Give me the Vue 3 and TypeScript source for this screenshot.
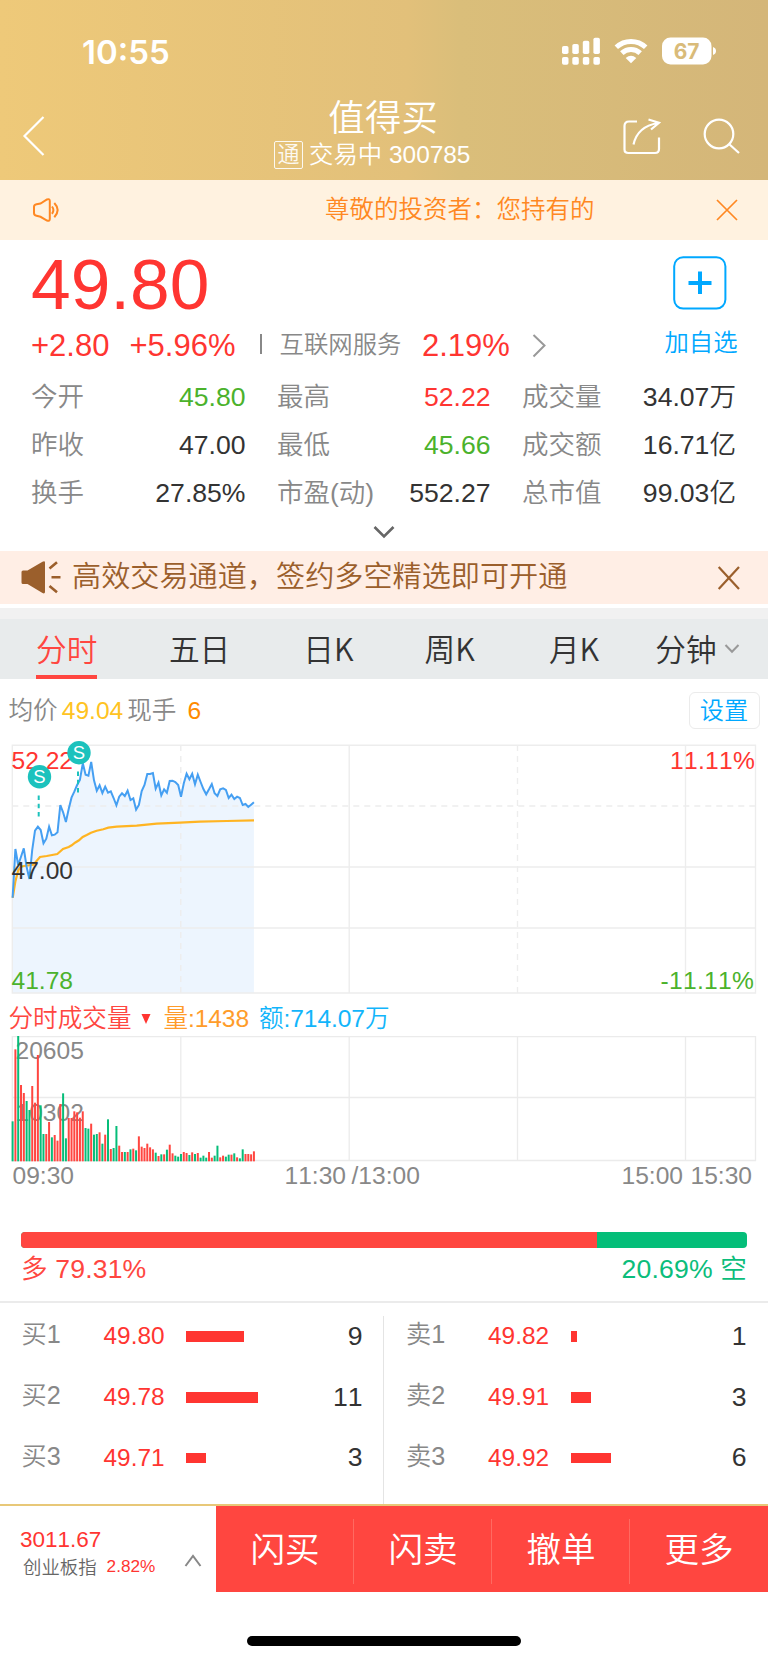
<script setup lang="ts">
interface Stat {
  label: string
  value: string
  tone?: 'up' | 'down'
}

interface Order {
  label: string
  price: string
  bar: number
  qty: number
}

const stats: Stat[] = [
  { label: '今开', value: '45.80', tone: 'down' },
  { label: '最高', value: '52.22', tone: 'up' },
  { label: '成交量', value: '34.07万' },
  { label: '昨收', value: '47.00' },
  { label: '最低', value: '45.66', tone: 'down' },
  { label: '成交额', value: '16.71亿' },
  { label: '换手', value: '27.85%' },
  { label: '市盈(动)', value: '552.27' },
  { label: '总市值', value: '99.03亿' },
]

const tabs: string[] = ['分时', '五日', '日K', '周K', '月K', '分钟']

const buys: Order[] = [
  { label: '买1', price: '49.80', bar: 58, qty: 9 },
  { label: '买2', price: '49.78', bar: 72, qty: 11 },
  { label: '买3', price: '49.71', bar: 20, qty: 3 },
]
const sells: Order[] = [
  { label: '卖1', price: '49.82', bar: 6.5, qty: 1 },
  { label: '卖2', price: '49.91', bar: 20, qty: 3 },
  { label: '卖3', price: '49.92', bar: 40, qty: 6 },
]
const books: Order[][] = [buys, sells]
const actions: string[] = ['闪买', '闪卖', '撤单', '更多']

// One sample per minute from 09:30; values are thirds of a pixel below the chart's top edge.
const startX = 12.6
const stepX = 2.806
const price: number[] = [
  503, 357, 405, 380, 355, 410, 447, 360, 302, 290, 300, 340, 326, 290, 316, 314, 307, 225, 247, 276,
  237, 203, 185, 165, 150, 100, 134, 137, 96, 151, 182, 166, 189, 170, 188, 184, 204, 226, 200, 190,
  198, 182, 210, 205, 239, 225, 183, 165, 132, 132, 129, 176, 158, 196, 178, 188, 153, 152, 156, 165,
  200, 160, 131, 148, 131, 163, 134, 156, 177, 193, 178, 162, 190, 198, 178, 175, 180, 204, 194, 207,
  200, 204, 225, 222, 231, 224, 217,
]
const average: [number, number][] = [
  [38, 503], [46, 455], [55, 420], [63, 410], [72, 408], [100, 404], [120, 381], [140, 378], [172, 372],
  [189, 357], [206, 351], [215, 346], [225, 338], [237, 331], [248, 321], [260, 315], [273, 308],
  [290, 302], [310, 298], [325, 293], [350, 290], [410, 287], [470, 281], [540, 278], [600, 275],
  [680, 273], [762, 271],
]
const pricePoints: string = price.map((y, i) => `${(startX + i * stepX).toFixed(1)},${(y / 3).toFixed(1)}`).join(' ')
const areaPoints: string = `${startX},263 ${pricePoints} ${(startX + 86 * stepX).toFixed(1)},263`
const averagePoints: string = average.map(([x, y]) => `${(x / 3).toFixed(1)},${(y / 3).toFixed(1)}`).join(' ')

const volumeTop: number[] = [
  394, 178, 137, 285, 309, 333, 360, 288, 338, 195, 346, 432, 432, 396, 442, 435, 452, 342, 310, 445,
  384, 384, 364, 367, 383, 364, 414, 416, 401, 434, 432, 427, 461, 434, 388, 477, 474, 408, 467, 486,
  486, 486, 478, 476, 481, 439, 470, 474, 461, 472, 478, 488, 498, 493, 493, 479, 464, 490, 497, 500,
  492, 486, 489, 495, 487, 492, 489, 503, 497, 503, 486, 503, 497, 467, 502, 497, 500, 494, 494, 490,
  502, 505, 478, 492, 492, 493, 484,
]
const volumeSide: string =
  'grgrrggrrrggrrgrrrggrrrrrrggrggrgrgrggrrgrgrgrrrrrrgrgrgrrgggrrgrgrgggrrggrrggrgrggrrrr'
const bars = volumeTop.map((top, i) => ({
  x: startX + i * stepX - 1,
  y: top / 3 - 46,
  h: (514 - top) / 3,
  fill: volumeSide[i] === 'g' ? '#06bd79' : '#ff4640',
}))
</script>

<template>
  <div class="phone">
    <header class="top">
      <div class="status">
        <span class="clock">10:55</span>
        <svg class="status-icons" width="160" height="32" viewBox="0 0 160 32" fill="#fff">
          <rect x="6" y="11" width="6.5" height="8" rx="1.8" />
          <rect x="16.3" y="9" width="6.5" height="10" rx="1.8" />
          <rect x="26.8" y="5.8" width="6.5" height="13.2" rx="1.8" />
          <rect x="37.4" y="2.7" width="6.5" height="16.3" rx="1.8" />
          <rect v-for="x in [6, 16.3, 26.8, 37.4]" :key="x" :x="x" y="22" width="6.5" height="7.7" rx="1.8" />
          <g fill="none" stroke="#fff" stroke-width="5">
            <path d="M60.3 12.2A21.5 21.5 0 0 1 89.7 12.2" />
            <path d="M65.8 18.2A13.5 13.5 0 0 1 84.2 18.2" />
          </g>
          <path d="M75 28.2L69.7 22.9Q75 18.6 80.3 22.9Z" />
          <rect x="106" y="2.5" width="49.5" height="27" rx="8.5" />
          <path d="M157 12Q160 13.2 160 16T157 20Z" />
          <text x="130.6" y="23.7" text-anchor="middle" class="battery">67</text>
        </svg>
      </div>
      <div class="nav">
        <svg class="back" width="24" height="42" viewBox="0 0 24 42"><path d="M21.5 2L2.5 21L21.5 40" /></svg>
        <div class="title">
          <div class="name">值得买</div>
          <div class="sub"><span class="tag">通</span><span>交易中 300785</span></div>
        </div>
        <div class="nav-icons">
          <svg width="40" height="40" viewBox="0 0 40 40">
            <path d="M16 5.5H8Q3.5 5.5 3.5 10V33.5Q3.5 37 7.5 37H34Q38 37 38 33V21.5" />
            <path d="M12.5 28.5C15 17 22 9.5 37 7M27.5 3.5L38 6.8L30 13.5" />
          </svg>
          <svg width="40" height="40" viewBox="0 0 40 40">
            <circle cx="18" cy="18" r="14.3" />
            <path d="M28.3 28.3L38 37" />
          </svg>
        </div>
      </div>
    </header>

    <section class="notice">
      <svg width="28" height="26" viewBox="0 0 28 26">
        <path d="M4.5 7.2L8.5 6.5L15 2.5Q17.8 1.3 17.8 4V22Q17.8 24.6 15 23.5L8.5 19.8L4.5 18.8Q2 18.3 2 16V9.8Q2 7.6 4.5 7.2Z" />
        <path d="M20 9.5Q22.8 13 20 16.8M22.3 6Q29 13 22.3 20.3" />
      </svg>
      <p>尊敬的投资者：您持有的</p>
      <svg class="thin" width="24" height="24" viewBox="0 0 24 24"><path d="M2 2L22 22M22 2L2 22" /></svg>
    </section>

    <section class="quote">
      <div class="last up">49.80</div>
      <div class="change">
        <span class="up">+2.80</span>
        <span class="up">+5.96%</span>
        <i class="rule"></i>
        <span class="sector">互联网服务</span>
        <span class="up">2.19%</span>
        <svg width="16" height="26" viewBox="0 0 16 26"><path d="M1.5 2L12.5 12.5L1.5 23.5" /></svg>
      </div>
      <div class="watch">
        <svg width="54" height="54" viewBox="0 0 54 54">
          <rect x="1.2" y="1.2" width="51.2" height="51.4" rx="9" />
          <path d="M15.5 27H38.5M27 15.5V38" />
        </svg>
        <span>加自选</span>
      </div>
      <dl class="stats">
        <div v-for="s in stats" :key="s.label">
          <dt>{{ s.label }}</dt>
          <dd :class="s.tone">{{ s.value }}</dd>
        </div>
      </dl>
      <svg class="expand" width="24" height="14" viewBox="0 0 24 14"><path d="M2.5 2L12 11.5L21.5 2" /></svg>
    </section>

    <section class="promo">
      <svg width="42" height="38" viewBox="0 0 42 38">
        <path d="M2 11.5Q.5 11.5 .5 13V23.5Q.5 25 2 25H6.5L21.5 34.1Q24 35 24 33V3.5Q24 1.5 21.5 2.7L6.5 11.5Z" />
        <path class="rays" d="M28.5 9.5L36 3.2M30.5 18.2H39.5M28.5 27L36 33.3" />
      </svg>
      <p>高效交易通道，签约多空精选即可开通</p>
      <svg class="close" width="24" height="26" viewBox="0 0 24 26"><path d="M1.7 2L22 24M22 2L1.7 24" /></svg>
    </section>

    <nav class="tabs">
      <span v-for="(t, i) in tabs" :key="t" :class="{ active: i === 0 }">{{ t }}</span>
      <svg width="16" height="12" viewBox="0 0 16 12"><path d="M1.5 2L8 8.8L14.5 2" /></svg>
    </nav>

    <section class="avg">
      <span>均价</span><span class="yellow">49.04</span><span>现手</span><span class="orange">6</span>
      <button type="button">设置</button>
    </section>

    <svg class="chart" width="768" height="264" viewBox="0 0 768 264">
      <polygon :points="areaPoints" fill="#edf5fe" />
      <g fill="none" stroke="#ededed" stroke-width="1.4">
        <path d="M12.3 15.3H755.5V263H12.3ZM12.3 137H755.5M12.3 198H755.5M349.2 15V263M685.5 15V263" />
        <path d="M12.3 76H755.5M180.8 15V263M517.5 15V263" stroke-dasharray="6 5" />
      </g>
      <text x="11.5" y="39" fill="#ff3531">52.22</text>
      <text x="670" y="39" class="pct" fill="#ff3531">11.11%</text>
      <text x="11.5" y="258.5" fill="#4bb22c">41.78</text>
      <text x="660.5" y="258.5" class="pct" fill="#4bb22c">-11.11%</text>
      <polyline :points="averagePoints" fill="none" stroke="#ffb422" stroke-width="2.2" />
      <polyline :points="pricePoints" fill="none" stroke="#459ff2" stroke-width="2" />
      <text x="11.5" y="148.5" fill="#333">47.00</text>
      <path d="M38.7 65.5V87M78 41.5V63" stroke="#1cc2bd" stroke-width="2" stroke-dasharray="4.6 3.6" />
      <g fill="#1cc2bd">
        <circle cx="39.5" cy="46.8" r="11.7" />
        <circle cx="79" cy="22.8" r="11.7" />
      </g>
      <g class="mark">
        <text x="39.5" y="53.3">S</text>
        <text x="79" y="29.3">S</text>
      </g>
    </svg>

    <div class="legend">
      <span class="vol-name">分时成交量</span>
      <svg width="10" height="10" viewBox="0 0 10 10"><path d="M.5 0H9.5L5 10Z" fill="#ff3531" /></svg>
      <span class="vol-qty">量:1438</span>
      <span class="vol-amt">额:714.07万</span>
    </div>

    <svg class="chart" width="768" height="161" viewBox="0 0 768 161">
      <path
        d="M12.3 .6H755.5V124.5H12.3ZM12.3 61.5H755.5M180.8 1V125M349.2 1V125M517.5 1V125M685.5 1V125"
        fill="none"
        stroke="#ebebeb"
        stroke-width="1.3"
      />
      <g fill="#888">
        <text x="15.5" y="23">20605</text>
        <text x="15.5" y="84.5">10302</text>
        <text x="12.5" y="148">09:30</text>
        <text x="284.5" y="148">11:30</text>
        <text x="351.5" y="148">/13:00</text>
        <text x="621.5" y="148">15:00</text>
        <text x="690.5" y="148">15:30</text>
      </g>
      <rect v-for="(b, i) in bars" :key="i" :x="b.x" :y="b.y" width="2" :height="b.h" :fill="b.fill" />
    </svg>

    <section class="ratio">
      <div class="ratio-bar"><i></i></div>
      <div class="ratio-text"><span>多 79.31%</span><span class="short">20.69% 空</span></div>
    </section>

    <section class="book">
      <div v-for="(side, n) in books" :key="n" class="side">
        <div v-for="o in side" :key="o.label" class="order">
          <span class="lvl">{{ o.label }}</span>
          <span class="px">{{ o.price }}</span>
          <i class="depth" :style="{ width: o.bar + 'px' }"></i>
          <span class="qty">{{ o.qty }}</span>
        </div>
      </div>
    </section>

    <footer class="bottom">
      <div class="index">
        <div>
          <div class="index-val">3011.67</div>
          <div class="index-name"><span>创业板指</span><em>2.82%</em></div>
        </div>
        <svg width="18" height="14" viewBox="0 0 18 14"><path d="M1.5 12L9 2L16.5 12" /></svg>
      </div>
      <div class="actions">
        <span v-for="a in actions" :key="a">{{ a }}</span>
      </div>
    </footer>
    <div class="home"></div>
  </div>
</template>

<style>
body {
  margin: 0;
  background: #fff;
}
</style>

<style scoped>
.phone {
  width: 768px;
  height: 1663px;
  overflow: hidden;
  background: #fff;
  color: #333;
  font-family: 'Liberation Sans', 'Noto Sans CJK SC', sans-serif;
  font-size: 24.6px;
  font-weight: 350;
  font-kerning: none;
  white-space: nowrap;
}
svg {
  display: block;
  flex: none;
}
p,
dl,
dd {
  margin: 0;
}
.up {
  color: #ff3531;
}
.down {
  color: #4bb22c;
}

.top {
  height: 180px;
  background: linear-gradient(90deg, #eec979, #e2c07a 53%, #dabe7a 60%, #d4b679);
  color: #fff;
}
.status {
  display: flex;
  justify-content: space-between;
  height: 101px;
  box-sizing: border-box;
  padding: 35px 52px 0 82px;
}
.clock {
  font: 600 33px/34px Inter, sans-serif;
}
.battery {
  font: 700 21px Inter, sans-serif;
  fill: #d9bb79;
}
.nav {
  display: flex;
  height: 79px;
}
.nav svg {
  fill: none;
  stroke: #fff;
  stroke-width: 2.2;
}
.back {
  margin: 13.5px 0 0 22px;
}
.title {
  width: 674.5px;
  text-align: center;
  margin-right: -100px;
}
.name {
  font-size: 36.4px;
  line-height: 36px;
  letter-spacing: 0.3px;
}
.sub {
  display: flex;
  justify-content: center;
  align-items: center;
  gap: 6px;
  height: 36px;
  font-size: 24.4px;
  line-height: 36px;
  margin-left: -22px;
}
.tag {
  width: 27px;
  height: 26.5px;
  border: 1.5px solid #fff;
  border-radius: 2px;
  font-size: 22px;
  line-height: 26px;
  opacity: 0.9;
}
.nav-icons {
  display: flex;
  gap: 40px;
  margin: 14.5px 0 0;
}

.notice {
  display: flex;
  align-items: center;
  height: 60px;
  padding: 0 29px 0 32px;
  background: #fff2e0;
  color: #ff8822;
}
.notice svg {
  fill: none;
  stroke: #ff8822;
  stroke-width: 2;
}
.notice .thin {
  stroke-width: 1.7;
}
.notice p {
  flex: 1;
  padding-left: 265px;
  font-size: 24.5px;
  line-height: 62px;
}

.quote {
  display: grid;
  grid-template-columns: 1fr 72px;
  grid-template-rows: 84px 49px 149px 29px;
  height: 311px;
  box-sizing: border-box;
  padding: 0 30px 0 31px;
}
.last {
  font-size: 71.3px;
  line-height: 89px;
}
.change {
  grid-row: 2;
  display: grid;
  grid-template-columns: 98.5px 130px 20px 142.5px 110px auto;
  align-items: center;
  height: 43px;
  font-size: 31px;
}
.change svg,
.expand,
.tabs svg,
.index svg {
  fill: none;
  stroke: #999;
  stroke-width: 2;
}
.rule {
  width: 2px;
  height: 20px;
  margin-top: -3px;
  background: #888;
}
.sector {
  font-size: 24.4px;
  line-height: 40px;
  margin-top: -2px;
  color: #888;
}
.watch {
  grid-column: 2;
  grid-row: 1 / 3;
  display: flex;
  flex-direction: column;
  align-items: center;
  padding-top: 15.5px;
  color: #00a8ff;
  font-size: 24.4px;
}
.watch svg {
  fill: none;
  stroke: #00a8ff;
  stroke-width: 2;
  margin-left: -4px;
}
.watch path {
  stroke-width: 4;
}
.watch span {
  margin-left: -2px;
  line-height: 66px;
}
.stats {
  grid-column: 1 / 3;
  display: grid;
  grid-template-columns: 214.5px 213.5px 214px;
  column-gap: 31.5px;
  grid-auto-rows: 47.9px;
  font-size: 26.6px;
  line-height: 48px;
}
.stats div {
  display: flex;
  justify-content: space-between;
}
.stats dt {
  color: #888;
  font-size: 26.5px;
}
.expand {
  grid-column: 1 / 3;
  justify-self: center;
  margin: 2.5px 0 0 -1px;
  stroke: #666;
  stroke-width: 2.6;
}

.promo {
  display: flex;
  align-items: center;
  height: 53px;
  padding: 0 27px 0 21px;
  background: #ffeee5;
  color: #9b5f2c;
  margin-bottom: 4px;
}
.promo svg {
  fill: #9b5f2c;
}
.promo .rays,
.promo .close {
  fill: none;
  stroke: #9b5f2c;
  stroke-width: 2.6;
}
.promo .close {
  stroke-width: 2.2;
}
.promo p {
  flex: 1;
  padding-left: 9px;
  font-size: 29.15px;
  line-height: 55px;
}

.tabs {
  display: flex;
  align-items: center;
  height: 60px;
  border-top: 11px solid #f1f1f1;
  background: #e8ebec;
  padding-left: 36px;
  font-family: 'Noto Sans CJK SC', sans-serif;
  font-size: 30.7px;
}
.tabs span {
  height: 60px;
  line-height: 57px;
  box-sizing: border-box;
}
.tabs .active {
  color: #ff4640;
  border-bottom: 4px solid #ff4640;
}
.tabs span:nth-child(2) {
  margin-left: 71.5px;
}
.tabs span:nth-child(3) {
  margin-left: 73px;
}
.tabs span:nth-child(4) {
  margin-left: 71px;
}
.tabs span:nth-child(5) {
  margin-left: 74px;
}
.tabs span:nth-child(6) {
  margin-left: 56px;
}
.tabs svg {
  margin-left: 7px;
}

.avg {
  display: flex;
  align-items: center;
  height: 51px;
  padding: 6px 8.5px 0 8.5px;
  margin-bottom: -6px;
  line-height: 51px;
  color: #888;
}
.avg .yellow {
  color: #ffc322;
  margin: 0 4px;
}
.avg .orange {
  color: #ff8a00;
  margin-left: 11px;
}
.avg button {
  width: 71px;
  height: 37px;
  margin: -1px 0 0 auto;
  padding: 0;
  border: 1.5px solid #ebebeb;
  border-radius: 6px;
  background: #fff;
  color: #00a8ff;
  font: inherit;
  font-size: 24.2px;
  line-height: 36px;
}

.chart text {
  font-size: 24.6px;
}
.chart .pct {
  letter-spacing: 0.3px;
}
.chart .mark text {
  font-size: 18.5px;
  text-anchor: middle;
  fill: #fff;
}
.legend {
  display: flex;
  align-items: center;
  height: 42px;
  padding: 1px 0 0 8.5px;
  box-sizing: border-box;
}
.legend svg {
  margin: 6px 12.5px 0 9.5px;
}
.vol-name {
  color: #ff4640;
}
.vol-qty {
  color: #ff9c2a;
  margin-right: 10px;
  letter-spacing: -0.1px;
}
.vol-amt {
  color: #12b5fb;
  letter-spacing: -0.1px;
}

.ratio {
  height: 106px;
  box-sizing: border-box;
  padding: 35px 21px 0;
  border-bottom: 2px solid #ebebeb;
}
.ratio-bar {
  height: 16px;
  border-radius: 4px;
  background: #04be79;
  overflow: hidden;
}
.ratio-bar i {
  display: block;
  width: 576px;
  height: 16px;
  background: #ff4640;
}
.ratio-text {
  display: flex;
  justify-content: space-between;
  line-height: 42px;
  font-size: 26.6px;
  letter-spacing: 0.15px;
  color: #ff4640;
}
.short {
  color: #0bbd7b;
}

.book {
  display: flex;
  height: 203px;
  box-sizing: border-box;
  padding-top: 2.5px;
}
.side {
  width: 384px;
  box-sizing: border-box;
}
.side + .side {
  border-left: 1.5px solid #e4e4e4;
  margin: 10px 0 0 -1px;
  width: 385px;
}
.side + .side .order {
  padding-left: 22px;
}
.side + .side .order:first-child {
  margin-top: -10px;
}
.order {
  display: grid;
  grid-template-columns: 82px 82.5px 1fr auto;
  align-items: center;
  height: 60.7px;
  padding: 0 21.5px;
}
.lvl {
  color: #888;
  font-size: 25.2px;
  line-height: 40px;
  margin-top: -3px;
}
.px {
  color: #ff3531;
  font-size: 24.4px;
  padding-top: 1px;
}
.depth {
  height: 10.7px;
  margin-top: 1.5px;
  background: #ff3531;
}
.qty {
  font-size: 26.6px;
  padding-top: 1px;
}

.bottom {
  display: flex;
  height: 86px;
  margin-top: -2px;
  border-top: 2px solid #e8c878;
  background: #fff;
  position: relative;
}
.index {
  display: flex;
  justify-content: space-between;
  width: 216px;
  box-sizing: border-box;
  padding: 20px 14.5px 0 20px;
}
.index-val {
  color: #ff3531;
  font-size: 22.5px;
  line-height: 28px;
}
.index-name {
  display: flex;
  gap: 10px;
  padding-left: 3px;
  font-size: 18.4px;
  line-height: 27px;
  color: #666;
}
.index-name em {
  font-style: normal;
  font-size: 17.2px;
  line-height: 25px;
  color: #ff3531;
}
.index svg {
  margin-top: 28px;
  stroke: #888;
}
.actions {
  display: flex;
  flex: 1;
  background: #ff4640;
  color: #fff;
}
.actions span {
  flex: 1;
  text-align: center;
  font-size: 34.6px;
  line-height: 89px;
  background: linear-gradient(#ff6a61, #ff6a61) right 13px / 1.5px 65px no-repeat;
}
.actions span:last-child {
  background: none;
}
.home {
  width: 274px;
  height: 10px;
  border-radius: 5px;
  background: #000;
  margin: 44px 0 0 247px;
}
</style>
